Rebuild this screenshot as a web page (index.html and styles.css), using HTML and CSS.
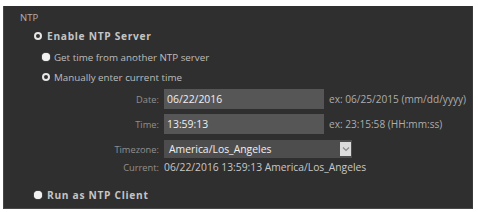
FILE: index.html
```html
<!DOCTYPE html>
<html>
<head>
<meta charset="utf-8">
<link rel="stylesheet" href="styles.css">
</head>
<body>
<div class="panel">
  <div class="title">NTP</div>
  <div class="opt main first"><span class="radio sel"></span><span class="bold">Enable NTP Server</span></div>
  <div class="opt sub r2"><span class="radio dot"></span><span>Get time from another NTP server</span></div>
  <div class="opt sub r3"><span class="radio sel"></span><span>Manually enter current time</span></div>
  <div class="frow date">
    <span class="lbl">Date:</span>
    <span class="inp">06/22/2016</span>
    <span class="hint">ex: 06/25/2015 (mm/dd/yyyy)</span>
  </div>
  <div class="frow time">
    <span class="lbl">Time:</span>
    <span class="inp">13:59:13</span>
    <span class="hint">ex: 23:15:58 (HH:mm:ss)</span>
  </div>
  <div class="frow tz">
    <span class="lbl">Timezone:</span>
    <span class="sel-box"><span class="sel-text">America/Los_Angeles</span><span class="arrow"><svg width="8" height="6" viewBox="0 0 8 6"><path d="M1 1.5 L4 4.5 L7 1.5" fill="none" stroke="#8a8a8a" stroke-width="1.2"/></svg></span></span>
  </div>
  <div class="frow cur">
    <span class="lbl">Current:</span>
    <span class="curval">06/22/2016 13:59:13 America/Los_Angeles</span>
  </div>
  <div class="opt main last"><span class="radio dot"></span><span class="bold">Run as NTP Client</span></div>
</div>
</body>
</html>
```
FILE: styles.css
```css
html, body {
  margin: 0;
  padding: 0;
  background: #ffffff;
}
body {
  width: 478px;
  height: 212px;
  overflow: hidden;
  font-family: "Open Sans", "Liberation Sans", sans-serif;
}
.panel {
  margin: 6px 0 0 3px;
  width: 470px;
  height: 203px;
  background: #2f2f2f;
  border-left: 1px solid #474747;
  border-right: 1px solid #3a3a3a;
  border-bottom: 1px solid #484848;
  box-sizing: border-box;
  padding-top: 6px;
  display: flex;
  flex-direction: column;
}
.title {
  height: 12px;
  line-height: 12px;
  font-size: 9.5px;
  color: #b0b0b0;
  padding-left: 16px;
}
.opt {
  display: flex;
  align-items: center;
  height: 14px;
  font-size: 9.8px;
  color: #bdbdbd;
}
.opt.main { padding-left: 30px; }
.opt.sub { padding-left: 38px; }
.opt.first { margin-top: 5px; }
.opt.r2 { margin-top: 7px; }
.opt.r3 { margin-top: 6px; }
.opt.last { margin-top: 15px; }
.bold {
  font-weight: 700;
  font-size: 10.2px;
  letter-spacing: 0.7px;
  color: #c4c4c4;
}
.radio {
  width: 8px;
  height: 8px;
  border-radius: 50%;
  box-sizing: border-box;
  margin-right: 4px;
  flex: none;
}
.opt.main .radio { margin-right: 5px; }
.radio.sel {
  border: 2px solid #e6e6e6;
  background: #303030;
}
.radio.dot {
  background: #f2f2f2;
  box-shadow: 0 0 1px #fff;
}
.frow {
  display: flex;
  align-items: center;
  font-size: 9px;
}
.frow .lbl {
  width: 160px;
  text-align: right;
  padding-right: 5px;
  box-sizing: border-box;
  color: #8f8f8f;
  font-size: 9.3px;
  flex: none;
}
.frow.date { margin-top: 5px; height: 20px; }
.frow.time { margin-top: 5px; height: 20px; }
.frow.tz { margin-top: 6px; height: 18px; }
.frow.cur { margin-top: 3px; height: 12px; }
.inp {
  width: 160px;
  height: 20px;
  line-height: 20px;
  background: #565656;
  color: #f0f0f0;
  font-size: 10.4px;
  padding-left: 3px;
  box-sizing: border-box;
  flex: none;
}
.hint {
  margin-left: 5px;
  color: #adadad;
  font-size: 10.1px;
}
.sel-box {
  width: 188px;
  height: 18px;
  background: #4d4d4d;
  display: flex;
  align-items: center;
  justify-content: space-between;
  box-sizing: border-box;
  padding-left: 5px;
  flex: none;
}
.sel-text {
  color: #f0f0f0;
  font-size: 10.4px;
}
.arrow {
  width: 11px;
  height: 14px;
  margin-right: 1px;
  background: #dcdcdc;
  display: flex;
  align-items: center;
  justify-content: center;
}
.curval {
  color: #c8c8c8;
  font-size: 10.3px;
}
```
